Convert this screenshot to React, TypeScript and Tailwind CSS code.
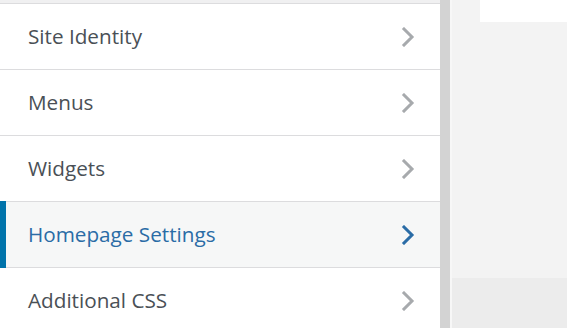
import React from "react";

const items = [
  { label: "Site Identity", active: false },
  { label: "Menus", active: false },
  { label: "Widgets", active: false },
  { label: "Homepage Settings", active: true },
  { label: "Additional CSS", active: false },
];

function Chevron({ color }: { color: string }) {
  return (
    <svg width="14" height="20" viewBox="0 0 14 20" fill="none">
      <path d="M3 2 L11 10 L3 18" stroke={color} strokeWidth="3" strokeLinecap="square" />
    </svg>
  );
}

export default function App() {
  return (
    <div
      className="flex w-[567px] h-[328px] overflow-hidden bg-[#f3f3f3]"
      style={{ fontFamily: '"Open Sans", "Noto Sans", sans-serif' }}
    >
      <div className="w-[440px] shrink-0 bg-white flex flex-col">
        <div className="h-[4px] shrink-0 bg-[#f0f0f1] border-b border-[#dcdcde]" />
        {items.map((it) => (
          <div
            key={it.label}
            className={`relative flex items-center justify-between h-[66px] shrink-0 border-b border-[#dcdcde] pl-[28px] pr-[25px] ${
              it.active ? "bg-[#f6f7f7]" : "bg-white"
            }`}
          >
            {it.active && <div className="absolute left-0 top-[-1px] bottom-[-1px] w-[6px] bg-[#0073aa]" />}
            <span className={`text-[20.7px] font-medium ${it.active ? "text-[#2a6ca6]" : "text-[#4a5056]"}`}>{it.label}</span>
            <Chevron color={it.active ? "#2a6ca6" : "#a7aaad"} />
          </div>
        ))}
      </div>
      <div className="w-[10px] shrink-0 bg-[#d3d3d3]" />
      <div className="w-[2px] shrink-0 bg-[#f7f7f7]" />
      <div className="flex-1 flex flex-col">
        <div className="flex h-[22px] shrink-0">
          <div className="w-[28px] bg-[#f3f3f3]" />
          <div className="flex-1 bg-white" />
        </div>
        <div className="flex-1 bg-[#f3f3f3]" />
        <div className="h-[50px] shrink-0 bg-[#ececec]" />
      </div>
    </div>
  );
}
